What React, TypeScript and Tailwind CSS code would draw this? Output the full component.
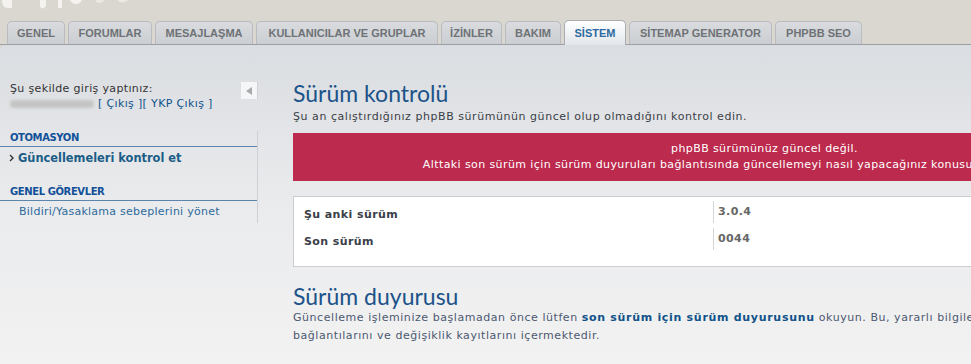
import React from 'react';

const tabs = [
  { label: 'GENEL', w: 'w-[58px]' },
  { label: 'FORUMLAR', w: 'w-[84px]' },
  { label: 'MESAJLAŞMA', w: 'w-[98px]' },
  { label: 'KULLANICILAR VE GRUPLAR', w: 'w-[182px]' },
  { label: 'İZİNLER', w: 'w-[61px]' },
  { label: 'BAKIM', w: 'w-[56px]' },
  { label: 'SİSTEM', w: 'w-[62px]', active: true },
  { label: 'SİTEMAP GENERATOR', w: 'w-[143px]' },
  { label: 'PHPBB SEO', w: 'w-[87px]' },
];

const verdana = "font-['DejaVu_Sans',Verdana,sans-serif]";
const heading = "font-['Lato','Trebuchet_MS',sans-serif]";

function Tab({ label, w, active }: { label: string; w: string; active?: boolean }) {
  if (active) {
    return (
      <div
        className={`${w} h-[25px] -mb-px flex items-center justify-center rounded-t-[5px] border border-b-0 border-[#a9adb1] bg-gradient-to-b from-[#ffffff] to-[#e2e6ea] text-[11px] font-bold text-[#2d6aa0] font-['Liberation_Sans',Arial,sans-serif]`}
      >
        {label}
      </div>
    );
  }
  return (
    <div
      className={`${w} h-[23px] flex items-center justify-center rounded-t-[5px] border border-b-0 border-[#b8bbbf] bg-gradient-to-b from-[#d9dbde] to-[#cbced2] text-[11px] font-bold text-[#6e7276] font-['Liberation_Sans',Arial,sans-serif]`}
    >
      {label}
    </div>
  );
}

export default function App() {
  return (
    <div className="w-[971px] h-[364px] overflow-hidden bg-[#dad7d0]">
      <div className="w-[1260px]">
        {/* logo remnant */}
        <div className="relative h-[22px]">
          <svg className="absolute left-0 top-0" width="140" height="10" viewBox="0 0 140 10">
            <path d="M2 0 C2 5 4 8 8 8 L12 8 L12 0 Z" fill="#f4f3f0" />
            <path d="M40 0 L46 0 L46 6 C44 9 42 9 40 7 Z" fill="#f4f3f0" />
            <path d="M58 0 L62 0 L62 8 L58 8 Z" fill="#f4f3f0" />
            <path d="M70 0 C72 4 76 5 80 3 L82 0 Z" fill="#f4f3f0" />
            <path d="M96 0 L104 0 C103 3 99 4 96 2 Z" fill="#ebe9e4" />
            <path d="M118 0 L128 0 C126 3 121 3 118 1 Z" fill="#ebe9e4" />
          </svg>
        </div>

        {/* tabs */}
        <div className="flex items-end gap-[3px] pl-[7px] h-[23px] border-b border-[#9c9fa3]">
          {tabs.map((t) => (
            <Tab key={t.label} {...t} />
          ))}
        </div>

        {/* panel */}
        <div className={`h-[320px] rounded-tl-[6px] bg-gradient-to-b from-[#dadde1] via-[#eaebed] to-[#f2f2f2] flex ${verdana}`}>
          {/* sidebar */}
          <div className="w-[258px] shrink-0 pt-[36px]">
            <div className="flex">
              <div className="flex-1 pl-[10px] text-[11px] leading-[15px] text-[#333] tracking-[0.35px]">
                <div>Şu şekilde giriş yaptınız:</div>
                <div className="flex items-center">
                  <span className="inline-block w-[84px] h-[8px] rounded-full bg-[#c4c4c4] blur-[1.5px] mr-[4px]" />
                  <span className="text-[#105289]">[ Çıkış ][ YKP Çıkış ]</span>
                </div>
              </div>
              <div className="w-[17px] h-[17px] mt-[1px] bg-[#f5f6f7] flex items-center justify-center border-r border-[#cfd1d4]">
                <svg width="10" height="10" viewBox="0 0 10 10">
                  <path d="M8 1 L2 5 L8 9 Z" fill="#a8abae" />
                </svg>
              </div>
            </div>
            <div className="border-r border-[#cfd2d5] h-[92px]">
              <div className="mt-[20px] pl-[10px] pb-[1px] border-b border-[#5c85ab] text-[10px] font-bold text-[#115098] leading-[14px] tracking-[-0.4px]">OTOMASYON</div>
              <div className="mt-[3px] pl-[9px] flex items-center text-[11.4px] font-bold text-[#1c5d87] leading-[16px]">
                <svg width="6" height="8" viewBox="0 0 6 8" className="mr-[3px]">
                  <path d="M1 1 L4 4 L1 7" stroke="#333" strokeWidth="1.4" fill="none" />
                </svg>
                Güncellemeleri kontrol et
              </div>
              <div className="mt-[19px] pl-[10px] pb-[1px] border-b border-[#5c85ab] text-[10px] font-bold text-[#115098] leading-[14px] tracking-[-0.4px]">GENEL GÖREVLER</div>
              <div className="mt-[3px] pl-[19px] text-[11px] text-[#2d6a9c] leading-[15px] tracking-[0.25px]">Bildiri/Yasaklama sebeplerini yönet</div>
            </div>
          </div>

          {/* main */}
          <div className="pl-[35px] w-[978px] shrink-0 pt-[34px] tracking-[0.4px]">
            <h1 className={`${heading} text-[23px] leading-[28px] text-[#1c5389] tracking-normal`}>Sürüm kontrolü</h1>
            <p className="text-[11px] leading-[15px] text-[#3b3f46] mt-[2px] tracking-[0.55px]">
              Şu an çalıştırdığınız phpBB sürümünün güncel olup olmadığını kontrol edin.
            </p>
            <div className="mt-[9px] bg-[#bc2a4d] text-white text-[11px] leading-[16px] text-center py-[8px]">
              <div>phpBB sürümünüz güncel değil.</div>
              <div>Alttaki son sürüm için sürüm duyuruları bağlantısında güncellemeyi nasıl yapacağınız konusunda bilgi bulabilirsiniz.</div>
            </div>
            <div className="mt-[15px] bg-white border border-[#cccccc] h-[71px] pt-[4px] text-[11px] leading-[15px]">
              <div className="flex h-[27px]">
                <div className="w-[419px] pl-[10px] font-bold text-[#3a3e48] mt-[6px]">Şu anki sürüm</div>
                <div className="border-l border-[#d5d5d5] h-[22px] pl-[4px] pt-[3px] font-bold text-[#666]">3.0.4</div>
              </div>
              <div className="flex h-[27px]">
                <div className="w-[419px] pl-[10px] font-bold text-[#3a3e48] mt-[6px]">Son sürüm</div>
                <div className="border-l border-[#d5d5d5] h-[22px] pl-[4px] pt-[3px] font-bold text-[#666]">0044</div>
              </div>
            </div>
            <h2 className={`${heading} mt-[16px] text-[23px] leading-[26px] text-[#1c5389] tracking-normal`}>Sürüm duyurusu</h2>
            <p className="text-[11px] leading-[18px] text-[#4c5870] tracking-[0.55px]">
              Güncelleme işleminize başlamadan önce lütfen{' '}
              <b className="text-[#105289] tracking-[0.7px]">son sürüm için sürüm duyurusunu</b> okuyun. Bu, yararlı bilgilerin yanı sıra tam indirme
              <br />
              bağlantılarını ve değişiklik kayıtlarını içermektedir.
            </p>
          </div>
        </div>
      </div>
    </div>
  );
}
